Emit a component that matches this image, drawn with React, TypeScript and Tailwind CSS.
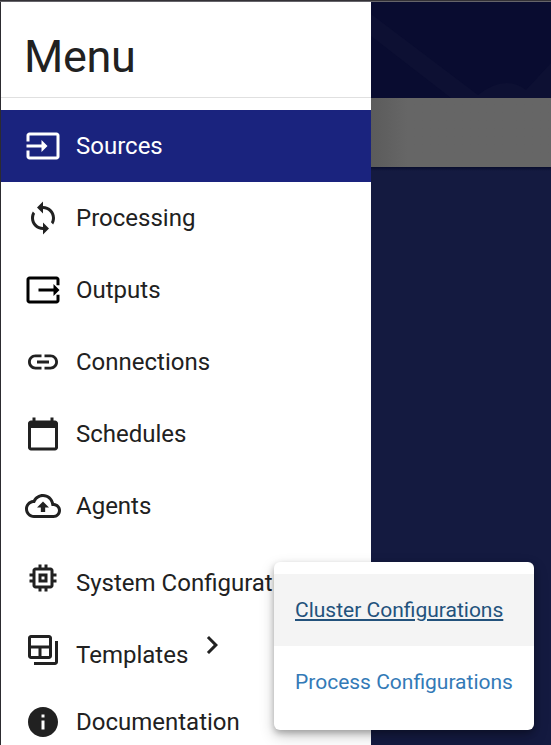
import type { ReactNode } from 'react';

const icons = {
  input:
    'M21 3.01H3c-1.1 0-2 .9-2 2V9h2V4.99h18v14.03H3V15H1v4.01c0 1.1.9 1.98 2 1.98h18c1.1 0 2-.88 2-1.98v-14c0-1.11-.9-2-2-2zM11 16l4-4-4-4v3H1v2h10v3z',
  sync: 'M12 4V1L8 5l4 4V6c3.31 0 6 2.69 6 6 0 1.01-.25 1.97-.7 2.8l1.46 1.46C19.54 15.03 20 13.57 20 12c0-4.42-3.58-8-8-8zm0 14c-3.31 0-6-2.69-6-6 0-1.01.25-1.97.7-2.8L5.24 7.74C4.46 8.97 4 10.43 4 12c0 4.42 3.58 8 8 8v3l4-4-4-4v3z',
  output:
    'M21 3H3c-1.1 0-2 .9-2 2v14c0 1.1.9 2 2 2h18c1.1 0 2-.9 2-2v-3.8h-2V19H3V5h18v3.8h2V5c0-1.1-.9-2-2-2zM19 16l4-4-4-4v3H9v2h10v3z',
  link: 'M3.9 12c0-1.71 1.39-3.1 3.1-3.1h4V7H7c-2.76 0-5 2.24-5 5s2.24 5 5 5h4v-1.9H7c-1.71 0-3.1-1.39-3.1-3.1zM8 13h8v-2H8v2zm9-6h-4v1.9h4c1.71 0 3.1 1.39 3.1 3.1s-1.39 3.1-3.1 3.1h-4V17h4c2.76 0 5-2.24 5-5s-2.24-5-5-5z',
  calendar:
    'M20 3h-1V1h-2v2H7V1H5v2H4c-1.1 0-2 .9-2 2v16c0 1.1.9 2 2 2h16c1.1 0 2-.9 2-2V5c0-1.1-.9-2-2-2zm0 18H4V8h16v13z',
  cloud:
    'M19.35 10.04C18.67 6.59 15.64 4 12 4 9.11 4 6.6 5.64 5.35 8.04 2.34 8.36 0 10.91 0 14c0 3.31 2.69 6 6 6h13c2.76 0 5-2.24 5-5 0-2.64-2.05-4.78-4.65-4.96zM19 18H6c-2.21 0-4-1.79-4-4 0-2.05 1.53-3.76 3.56-3.97l1.07-.11.5-.95C8.08 7.14 9.94 6 12 6c2.62 0 4.88 1.86 5.39 4.43l.3 1.5 1.53.11c1.56.1 2.78 1.41 2.78 2.96 0 1.65-1.35 3-3 3zM8 13h2.55v3h2.9v-3H16l-4-4z',
  memory:
    'M15 9H9v6h6V9zm-2 4h-2v-2h2v2zm8-2V9h-2V7c0-1.1-.9-2-2-2h-2V3h-2v2h-2V3H9v2H7c-1.1 0-2 .9-2 2v2H3v2h2v2H3v2h2v2c0 1.1.9 2 2 2h2v2h2v-2h2v2h2v-2h2c1.1 0 2-.9 2-2v-2h2v-2h-2v-2h2zm-4 6H7V7h10v10z',
  table:
    'M20 6v14H6v2h14c1.1 0 2-.9 2-2V6h-2zM16 2H4c-1.1 0-2 .9-2 2v12c0 1.1.9 2 2 2h12c1.1 0 2-.9 2-2V4c0-1.1-.9-2-2-2zM9 16H4v-5h5v5zm7 0h-5v-5h5v5zm0-7H4V4h12v5z',
  info: 'M12 2C6.48 2 2 6.48 2 12s4.48 10 10 10 10-4.48 10-10S17.52 2 12 2zm1 15h-2v-6h2v6zm0-8h-2V7h2v2z',
  chevron: 'M10 6L8.59 7.41 13.17 12l-4.58 4.59L10 18l6-6z',
};

function Icon({ name, className = '' }: { name: keyof typeof icons; className?: string }) {
  return (
    <svg viewBox="0 0 24 24" className={`size-9 shrink-0 fill-current ${className}`}>
      <path d={icons[name]} />
    </svg>
  );
}

function Item({
  icon,
  label,
  active,
  low,
  iconClass,
  children,
}: {
  icon: keyof typeof icons;
  label: string;
  active?: boolean;
  low?: boolean;
  iconClass?: string;
  children?: ReactNode;
}) {
  return (
    <a className={`flex h-[72px] shrink-0 items-center pl-6 ${active ? 'bg-[#1a237e] text-white' : 'text-[#212121]'}`}>
      <Icon name={icon} className={iconClass} />
      <span className={`ml-[15px] text-[24px] leading-8 whitespace-nowrap ${low ? 'pt-[10px]' : ''}`}>{label}</span>
      {children}
    </a>
  );
}

export default function App() {
  return (
    <div className="relative flex h-[745px] w-[551px] flex-col overflow-hidden bg-[#141a40] font-[Roboto,sans-serif]">
      <div className="h-px shrink-0 bg-[#333136]" />
      <div className="h-px shrink-0 bg-[#65646a]" />
      <div className="flex min-h-0 flex-1">
        <nav className="flex w-[371px] shrink-0 flex-col overflow-hidden border-l border-[#2c2b30] bg-white">
          <h1 className="h-24 shrink-0 border-b border-[#e0e0e0] pt-[27px] pl-[23px] text-[45px] leading-[56px] tracking-[-0.3px] text-[#212121]">Menu</h1>
          <div className="h-3 shrink-0" />
          <Item icon="input" label="Sources" active />
          <Item icon="sync" label="Processing" />
          <Item icon="output" label="Outputs" iconClass="text-black" />
          <Item icon="link" label="Connections" />
          <Item icon="calendar" label="Schedules" />
          <Item icon="cloud" label="Agents" />
          <Item icon="memory" label="System Configurations" low />
          <Item icon="table" label="Templates" low>
            <Icon name="chevron" className="mb-[10px] ml-[6px]" />
          </Item>
          <Item icon="info" label="Documentation" />
        </nav>
        <main className="flex min-w-0 flex-1 flex-col">
          <div className="h-24 shrink-0 bg-[#090c30]">
            <svg viewBox="0 0 180 96" className="h-24 w-[180px] fill-[#0d1033]">
              <path d="M0 12L107 93Q134 72 155 88L180 61V96H80L0 34Z" />
            </svg>
          </div>
          <div className="h-[69px] shrink-0 bg-[#666666] bg-linear-to-r from-[#5b5b5b] to-[#666666] to-20%" />
          <div className="h-1 shrink-0 bg-linear-to-b from-[#090d2e] to-[#141a40]" />
        </main>
      </div>
      <div className="absolute top-[562px] left-[274px] flex h-[168px] w-[260px] flex-col rounded-[6px] bg-white py-3 text-[21px] shadow-[0_3px_6px_rgba(0,0,0,0.25),0_6px_15px_rgba(0,0,0,0.2)]">
        <a className="flex h-[72px] items-center bg-[#f4f4f4] pt-[2px] pl-[21px] whitespace-nowrap text-[#23527c] underline">Cluster Configurations</a>
        <a className="flex h-[72px] items-center pt-[2px] pl-[21px] whitespace-nowrap text-[#337ab7]">Process Configurations</a>
      </div>
    </div>
  );
}
